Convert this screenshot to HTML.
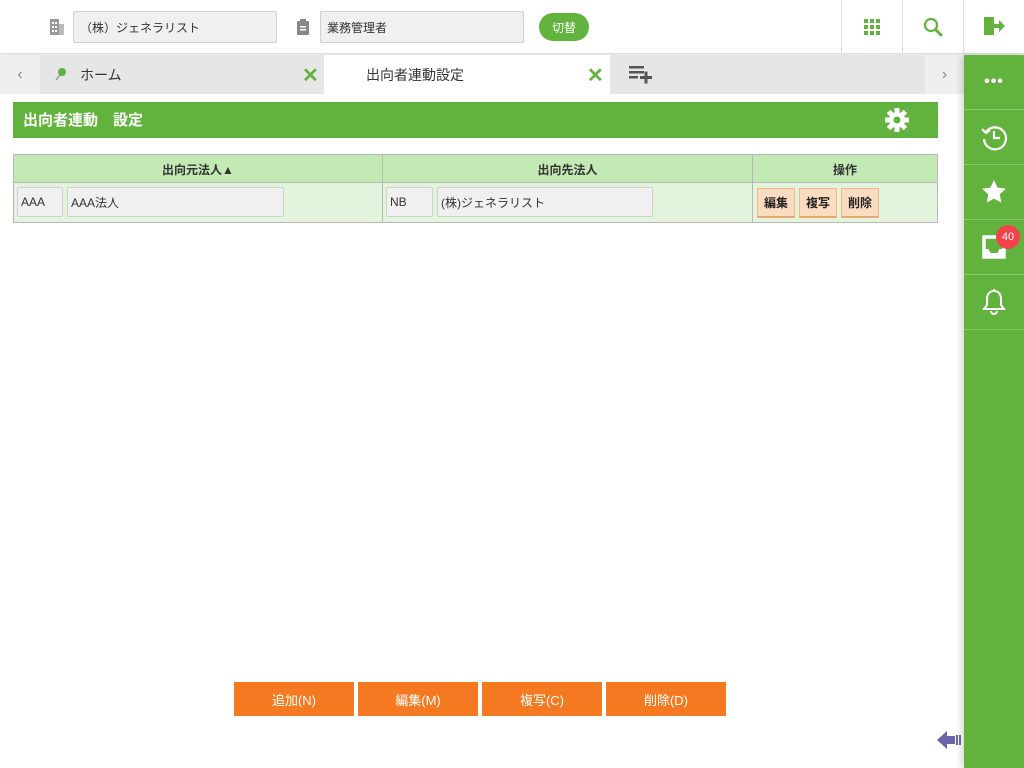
<!DOCTYPE html>
<html><head><meta charset="utf-8"><style>
*{box-sizing:border-box;margin:0;padding:0}
body{width:1024px;height:768px;overflow:hidden;background:#fff;font-family:"Liberation Sans","Noto Sans CJK JP",sans-serif;font-size:13px;color:#333;position:relative}
.a{position:absolute}
.inp{position:absolute;background:#f0f0f0;border:1px solid #d0d0d0;border-radius:2px;font-size:12px;padding-left:6px;display:flex;align-items:center}
.sb{position:absolute;left:964px;width:60px;height:55px;border-bottom:1px solid #8bc568;display:flex;align-items:center;justify-content:center;color:#fff}
.ob{position:absolute;top:682px;width:120px;height:34px;background:#f47920;color:#fff;font-size:13px;display:flex;align-items:center;justify-content:center}
.sbtn{position:absolute;top:188px;height:30px;background:#fcdcc0;border:1px solid #f0b88a;border-bottom:2px solid #e8a872;font-size:12px;font-weight:bold;color:#222;display:flex;align-items:center;justify-content:center}
</style></head><body>
<div class="a" style="left:0;top:0;width:1024px;height:54px;border-bottom:1px solid #ddd;box-shadow:0 1px 3px rgba(0,0,0,.15)"></div>
<svg class="a" style="left:50px;top:19px" width="14" height="16"><rect x="0" y="0" width="9" height="16" fill="#999"/><rect x="9" y="5" width="5" height="11" fill="#bbb"/><g fill="#fff"><rect x="2" y="3" width="2" height="2"/><rect x="5" y="3" width="2" height="2"/><rect x="2" y="7" width="2" height="2"/><rect x="5" y="7" width="2" height="2"/><rect x="2" y="11" width="2" height="2"/><rect x="5" y="11" width="2" height="2"/></g></svg>
<div class="inp" style="left:73px;top:11px;width:204px;height:32px">（株）ジェネラリスト</div>
<svg class="a" style="left:297px;top:19px" width="12" height="16"><rect x="0" y="2" width="12" height="14" rx="1" fill="#888"/><rect x="3" y="0" width="6" height="4" fill="#888"/><g fill="#fff"><rect x="3" y="7" width="6" height="1.5"/><rect x="3" y="10" width="6" height="1.5"/></g></svg>
<div class="inp" style="left:320px;top:11px;width:204px;height:32px">業務管理者</div>
<div class="a" style="left:539px;top:13px;width:50px;height:28px;background:#62b33d;border-radius:14px;color:#fff;font-size:12px;display:flex;align-items:center;justify-content:center">切替</div>
<div class="a" style="left:841px;top:0;width:1px;height:54px;background:#ddd"></div>
<div class="a" style="left:902px;top:0;width:1px;height:54px;background:#ddd"></div>
<div class="a" style="left:963px;top:0;width:1px;height:54px;background:#ddd"></div>
<svg class="a" style="left:864px;top:19px" width="16" height="16" fill="#62b33d"><rect x="0" y="0" width="4" height="4"/><rect x="6" y="0" width="4" height="4"/><rect x="12" y="0" width="4" height="4"/><rect x="0" y="6" width="4" height="4"/><rect x="6" y="6" width="4" height="4"/><rect x="12" y="6" width="4" height="4"/><rect x="0" y="12" width="4" height="4"/><rect x="6" y="12" width="4" height="4"/><rect x="12" y="12" width="4" height="4"/></svg>
<svg class="a" style="left:923px;top:17px" width="20" height="20"><circle cx="8" cy="8" r="6" fill="none" stroke="#62b33d" stroke-width="2.2"/><path d="M12.5 12.5 L18 18" stroke="#62b33d" stroke-width="3" stroke-linecap="round"/></svg>
<svg class="a" style="left:983px;top:16px" width="22" height="20" fill="#62b33d"><path d="M1 1h9v3H5v12h5v3H1z"/><path d="M4 3l7-2v18l-7-2z"/><path d="M11 8h5V4l6 6-6 6v-4h-5z"/></svg>
<div class="a" style="left:0;top:55px;width:964px;height:39px;background:#e6e6e6"></div>
<div class="a" style="left:0;top:55px;width:40px;height:39px;background:#efefef;color:#888;font-size:16px;display:flex;align-items:center;justify-content:center">‹</div>
<div class="a" style="left:925px;top:55px;width:39px;height:39px;background:#efefef;color:#888;font-size:16px;display:flex;align-items:center;justify-content:center">›</div>
<svg class="a" style="left:55px;top:67px" width="12" height="14"><circle cx="7" cy="5" r="4" fill="#62b33d"/><path d="M5 8L1 13" stroke="#999" stroke-width="1.5"/></svg>
<div class="a" style="left:80px;top:65px;font-size:14px">ホーム</div>
<div class="a" style="left:302px;top:63px;color:#62b33d;font-size:20px;font-weight:bold">✕</div>
<div class="a" style="left:324px;top:55px;width:286px;height:39px;background:#fff"></div>
<div class="a" style="left:366px;top:65px;font-size:14px">出向者連動設定</div>
<div class="a" style="left:587px;top:63px;color:#62b33d;font-size:20px;font-weight:bold">✕</div>
<svg class="a" style="left:629px;top:66px" width="24" height="18" fill="#555"><rect x="0" y="0" width="15" height="2.5"/><rect x="0" y="5" width="15" height="2.5"/><rect x="0" y="10" width="9" height="2.5"/><rect x="11" y="10" width="12" height="3"/><rect x="15.5" y="5.5" width="3" height="12"/></svg>
<div class="a" style="left:964px;top:55px;width:60px;height:713px;background:#62b33d;box-shadow:-3px 0 6px rgba(0,0,0,.15)"></div>
<div class="sb" style="top:55px;font-size:16px;font-weight:bold;letter-spacing:1px">•••</div>
<div class="sb" style="top:110px"><svg width="28" height="28" fill="none" stroke="#fff" stroke-width="2.2"><path d="M6 9A11 11 0 1 1 4 16"/><path d="M2 6l4 4 4-3" /><path d="M14 8v7h6"/></svg></div>
<div class="sb" style="top:165px"><svg width="26" height="26"><path d="M13 1l3.6 7.6 8.2 1-6 5.8 1.5 8.2L13 19.6 5.7 23.6l1.5-8.2-6-5.8 8.2-1z" fill="#fff"/></svg></div>
<div class="sb" style="top:220px"><svg width="26" height="26"><rect x="3" y="3" width="20" height="20" fill="none" stroke="#fff" stroke-width="3.5"/><path d="M1.5 15h6l2 4h7l2-4h6v9.5h-23z" fill="#fff"/></svg></div>
<div class="a" style="left:996px;top:225px;width:24px;height:24px;border-radius:12px;background:#f2434b;color:#fff;font-size:11px;display:flex;align-items:center;justify-content:center">40</div>
<div class="sb" style="top:275px"><svg width="26" height="28" fill="none" stroke="#fff" stroke-width="2"><path d="M13 3c-5 0-7 4-7 8v6l-3 4h20l-3-4v-6c0-4-2-8-7-8z"/><path d="M10 23a3 3 0 0 0 6 0"/><path d="M13 1v2"/></svg></div>
<div class="a" style="left:13px;top:102px;width:925px;height:36px;background:#62b33d;color:#fff;font-weight:bold;font-size:15px;padding:7px 0 0 10px">出向者連動　設定</div>
<svg class="a" style="left:885px;top:108px" width="24" height="24"><g fill="#fff" transform="translate(12 12)"><circle r="8"/><g><rect x="-2.5" y="-12" width="5" height="24"/><rect x="-2.5" y="-12" width="5" height="24" transform="rotate(45)"/><rect x="-2.5" y="-12" width="5" height="24" transform="rotate(90)"/><rect x="-2.5" y="-12" width="5" height="24" transform="rotate(135)"/></g></g><circle cx="12" cy="12" r="3.5" fill="#62b33d"/></svg>
<div class="a" style="left:13px;top:154px;width:925px;height:69px;border:1px solid #b8b8b8;background:#e3f4dc"></div>
<div class="a" style="left:14px;top:155px;width:923px;height:28px;background:#c3e9b4;border-bottom:1px solid #b8b8b8"></div>
<div class="a" style="left:382px;top:155px;width:1px;height:67px;background:#b8b8b8"></div>
<div class="a" style="left:752px;top:155px;width:1px;height:67px;background:#b8b8b8"></div>
<div class="a" style="left:14px;top:161px;width:368px;text-align:center;font-size:12px;font-weight:bold">出向元法人▲</div>
<div class="a" style="left:383px;top:161px;width:369px;text-align:center;font-size:12px;font-weight:bold">出向先法人</div>
<div class="a" style="left:753px;top:161px;width:184px;text-align:center;font-size:12px;font-weight:bold">操作</div>
<div class="inp" style="left:17px;top:187px;width:46px;height:30px;padding-left:3px">AAA</div>
<div class="inp" style="left:67px;top:187px;width:217px;height:30px;padding-left:3px">AAA法人</div>
<div class="inp" style="left:386px;top:187px;width:47px;height:30px;padding-left:3px">NB</div>
<div class="inp" style="left:437px;top:187px;width:216px;height:30px;padding-left:3px">(株)ジェネラリスト</div>
<div class="sbtn" style="left:757px;width:38px">編集</div>
<div class="sbtn" style="left:799px;width:38px">複写</div>
<div class="sbtn" style="left:841px;width:38px">削除</div>
<div class="ob" style="left:234px">追加(N)</div>
<div class="ob" style="left:358px">編集(M)</div>
<div class="ob" style="left:482px">複写(C)</div>
<div class="ob" style="left:606px">削除(D)</div>
<svg class="a" style="left:937px;top:731px" width="26" height="18" fill="#6a64a8"><path d="M0 9l10-9v5h8v8h-8v5z"/><rect x="19" y="4" width="2" height="10"/><rect x="22" y="4" width="2" height="10"/></svg>
</body></html>
